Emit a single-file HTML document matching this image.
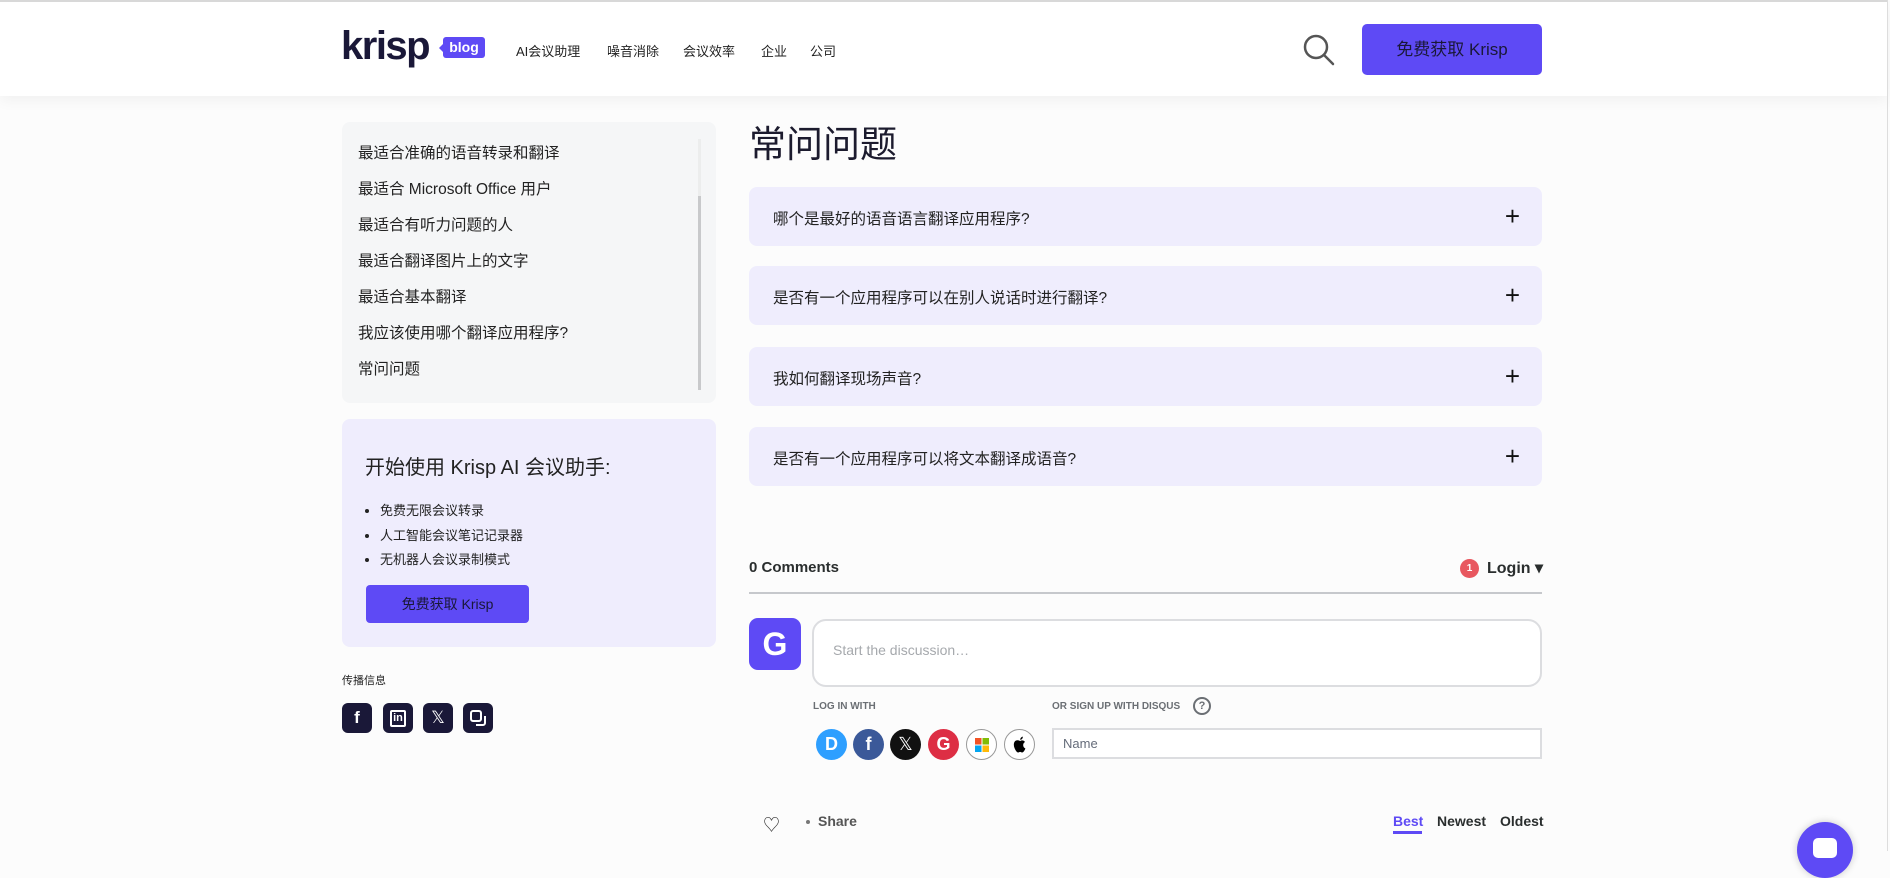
<!DOCTYPE html>
<html><head><meta charset="utf-8"><style>
*{box-sizing:border-box;margin:0;padding:0}
body{width:1890px;height:851px;overflow:hidden;background:#fcfcfc;font-family:"Liberation Sans","Noto Sans CJK SC",sans-serif;color:#1c1b2e;position:relative}
.abs{position:absolute}
.hdr{left:0;top:0;width:1888px;height:96px;background:#fff;border-top:2px solid #d8d8d8;box-shadow:0 4px 14px rgba(0,0,0,.05)}
.nav{font-size:13px;color:#222;top:41px}
.toc{left:342px;top:122px;width:374px;height:281px;background:#f5f6f7;border-radius:8px}
.toc div{position:absolute;left:16px;font-size:15.5px;color:#222}
.cta{left:342px;top:419px;width:374px;height:228px;background:#efedfd;border-radius:8px}
.faq{left:749px;width:793px;height:59px;background:#efedfd;border-radius:8px}
.faq span{position:absolute;left:24px;top:20px;font-size:15.5px;color:#222}
.faq b{position:absolute;right:22px;top:14px;font-size:26px;font-weight:300;color:#111}
.soc{width:30px;height:30px;background:#1a1838;border-radius:6px;top:703px;display:flex;align-items:center;justify-content:center;color:#fff}
.ci{width:31px;height:31px;border-radius:50%;top:729px;display:flex;align-items:center;justify-content:center;color:#fff;font-weight:bold;font-size:18px}
.dq{font-family:"Liberation Sans",sans-serif}
</style></head><body>
<div class="abs hdr"></div>
<div class="abs" style="left:341px;top:24px;font-size:40px;font-weight:bold;color:#1a1838;letter-spacing:-1.5px">krisp</div>
<div class="abs" style="left:443px;top:37px;width:42px;height:21px;background:#5e4af5;border-radius:3px;color:#fff;font-size:14px;font-weight:bold;text-align:center;line-height:21px">blog</div>
<div class="abs" style="left:439px;top:43px;width:0;height:0;border:5px solid transparent;border-right-color:#5e4af5;border-left:0"></div>
<div class="abs nav" style="left:516px">AI会议助理</div>
<div class="abs nav" style="left:607px">噪音消除</div>
<div class="abs nav" style="left:683px">会议效率</div>
<div class="abs nav" style="left:761px">企业</div>
<div class="abs nav" style="left:810px">公司</div>
<svg class="abs" style="left:1302px;top:33px" width="34" height="34" viewBox="0 0 34 34"><circle cx="14" cy="14" r="11" fill="none" stroke="#555" stroke-width="2.5"/><line x1="22" y1="22" x2="31" y2="31" stroke="#555" stroke-width="2.5" stroke-linecap="round"/></svg>
<div class="abs" style="left:1362px;top:24px;width:180px;height:51px;background:#5e4af5;border-radius:5px;color:#1a1838;font-size:17px;text-align:center;line-height:51px">免费获取 Krisp</div>
<div class="abs" style="left:1887px;top:0;width:1px;height:851px;background:#ddd"></div>

<div class="abs toc">
<div style="top:19px">最适合准确的语音转录和翻译</div>
<div style="top:55px">最适合 Microsoft Office 用户</div>
<div style="top:91px">最适合有听力问题的人</div>
<div style="top:127px">最适合翻译图片上的文字</div>
<div style="top:163px">最适合基本翻译</div>
<div style="top:199px">我应该使用哪个翻译应用程序?</div>
<div style="top:235px">常问问题</div>
<span class="abs" style="left:356px;top:17px;width:3px;height:251px;background:#eceded"></span>
<span class="abs" style="left:356px;top:74px;width:3px;height:194px;background:#c8c9cb"></span>
</div>

<div class="abs cta">
<div class="abs" style="left:23px;top:32px;font-size:20px;color:#222">开始使用 Krisp AI 会议助手:</div>
<ul class="abs" style="left:38px;top:80px;font-size:13px;line-height:24.5px;color:#222"><li>免费无限会议转录</li><li>人工智能会议笔记记录器</li><li>无机器人会议录制模式</li></ul>
<div class="abs" style="left:24px;top:166px;width:163px;height:38px;background:#5e4af5;border-radius:4px;color:#1a1838;font-size:14px;text-align:center;line-height:38px">免费获取 Krisp</div>
</div>
<div class="abs" style="left:342px;top:672px;font-size:11px;color:#222">传播信息</div>
<div class="abs soc" style="left:342px;font-weight:bold;font-size:17px">f</div>
<div class="abs soc" style="left:383px"><span style="border:2px solid #fff;border-radius:2px;font-size:11px;font-weight:bold;padding:0 1px;line-height:13px">in</span></div>
<div class="abs soc" style="left:423px;font-size:17px">𝕏</div>
<div class="abs soc" style="left:463px"><svg width="18" height="18" viewBox="0 0 18 18"><rect x="2" y="2" width="10" height="10" rx="2" fill="none" stroke="#fff" stroke-width="2"/><path d="M7 16h7a2 2 0 0 0 2-2V7" fill="none" stroke="#fff" stroke-width="2"/></svg></div>

<div class="abs" style="left:749px;top:114px;font-size:37px;color:#1c1b2e">常问问题</div>
<div class="abs faq" style="top:187px"><span>哪个是最好的语音语言翻译应用程序?</span><b>+</b></div>
<div class="abs faq" style="top:266px"><span>是否有一个应用程序可以在别人说话时进行翻译?</span><b>+</b></div>
<div class="abs faq" style="top:347px"><span>我如何翻译现场声音?</span><b>+</b></div>
<div class="abs faq" style="top:427px"><span>是否有一个应用程序可以将文本翻译成语音?</span><b>+</b></div>

<div class="abs dq" style="left:749px;top:559px;font-size:15px;font-weight:bold;color:#2a2e2e">0 Comments</div>
<div class="abs" style="left:1460px;top:559px;width:19px;height:19px;border-radius:50%;background:#e8575f;color:#fff;font-size:10px;font-weight:bold;text-align:center;line-height:19px">1</div>
<div class="abs dq" style="left:1487px;top:558px;font-size:16px;font-weight:bold;color:#2a2e2e">Login ▾</div>
<div class="abs" style="left:749px;top:592px;width:793px;height:2px;background:#c6c8cc"></div>
<div class="abs" style="left:749px;top:618px;width:52px;height:52px;border-radius:9px;background:#5e4af5;color:#fff;font-size:32px;font-weight:bold;text-align:center;line-height:52px">G</div>
<div class="abs" style="left:812px;top:619px;width:730px;height:68px;border:2px solid #dcdde0;border-radius:14px;background:#fff"></div>
<div class="abs dq" style="left:833px;top:642px;font-size:14px;color:#a6a9ad">Start the discussion…</div>
<div class="abs dq" style="left:813px;top:701px;font-size:10px;font-weight:bold;color:#6b6f74">LOG IN WITH</div>
<div class="abs dq" style="left:1052px;top:701px;font-size:10px;font-weight:bold;color:#6b6f74">OR SIGN UP WITH DISQUS</div>
<div class="abs" style="left:1193px;top:697px;width:18px;height:18px;border:2px solid #6b6f74;border-radius:50%;font-size:11px;text-align:center;line-height:14px;color:#6b6f74;font-weight:bold">?</div>
<div class="abs ci" style="left:816px;background:#2e9fff">D</div>
<div class="abs ci" style="left:853px;background:#3b5999">f</div>
<div class="abs ci" style="left:890px;background:#111;font-weight:normal">𝕏</div>
<div class="abs ci" style="left:928px;background:#dd2e44">G</div>
<div class="abs ci" style="left:966px;background:#fff;border:1px solid #999"><svg width="14" height="14"><rect width="6.5" height="6.5" fill="#f35325"/><rect x="7.5" width="6.5" height="6.5" fill="#81bc06"/><rect y="7.5" width="6.5" height="6.5" fill="#05a6f0"/><rect x="7.5" y="7.5" width="6.5" height="6.5" fill="#ffba08"/></svg></div>
<div class="abs ci" style="left:1004px;background:#fff;border:1px solid #999"><svg width="16" height="18" viewBox="0 0 16 18"><path d="M8 5C6.5 4 4.5 4 3.2 5 1.5 6.5 1.5 9.5 2.5 12c.8 2 2.2 4.5 3.6 4.5 1 0 1.2-.6 2-.6s1 .6 2 .6c1.3 0 2.5-2 3.3-4-1.6-.7-2.4-2.3-2.2-3.8.1-1.2.8-2.1 1.8-2.7C12 4.5 10.5 4 9 4.6 8.6 4.8 8.3 5 8 5z" fill="#000"/><path d="M8.2 3.8C8.1 2.3 9.3.8 10.8.6c.2 1.6-1 3.1-2.6 3.2z" fill="#000"/></svg></div>
<div class="abs" style="left:1052px;top:728px;width:490px;height:31px;border:2px solid #dcdde0;background:#fff"></div>
<div class="abs dq" style="left:1063px;top:736px;font-size:13px;color:#656c7a">Name</div>

<div class="abs" style="left:763px;top:811px;font-size:17px;color:#333">♡</div>
<div class="abs" style="left:806px;top:820px;width:4px;height:4px;border-radius:50%;background:#777"></div>
<div class="abs dq" style="left:818px;top:813px;font-size:14px;font-weight:bold;color:#555">Share</div>
<div class="abs dq" style="left:1393px;top:813px;font-size:14px;font-weight:bold;color:#5e4af5">Best</div>
<div class="abs" style="left:1393px;top:831px;width:29px;height:3px;background:#5e4af5"></div>
<div class="abs dq" style="left:1437px;top:813px;font-size:14px;font-weight:bold;color:#2a2e2e">Newest</div>
<div class="abs dq" style="left:1500px;top:813px;font-size:14px;font-weight:bold;color:#2a2e2e">Oldest</div>

<div class="abs" style="left:1797px;top:822px;width:56px;height:56px;border-radius:50%;background:#5e4af5;box-shadow:0 0 8px rgba(0,0,0,.2)"></div>
<div class="abs" style="left:1813px;top:838px;width:24px;height:20px;border-radius:5px;background:#fff"></div>
</body></html>
